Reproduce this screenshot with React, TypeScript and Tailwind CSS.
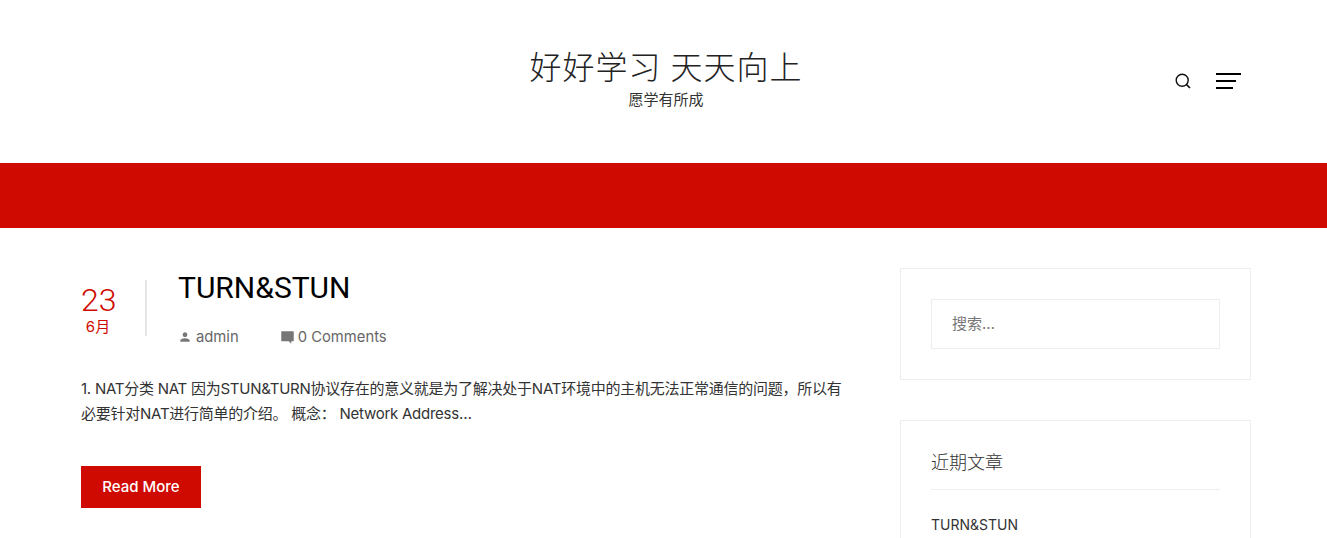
import React from 'react';

const sans = 'font-["Inter","Noto_Sans_CJK_SC",sans-serif]';

function SearchIcon() {
  return (
    <svg width="16" height="16" viewBox="0 0 16 16" fill="none" stroke="#111" strokeWidth="1.4">
      <circle cx="7.2" cy="7.2" r="6" />
      <path d="M11.6 11.6 15 15" strokeWidth="1.6" />
    </svg>
  );
}

function PostMeta() {
  return (
    <div className="flex items-center text-[14.8px] leading-[20px] text-[#666] mt-[19px]">
      <svg width="14" height="14" viewBox="0 0 24 24" fill="#777" className="mr-[4px]">
        <path d="M12 12c2.200 0 4-1.800 4-4s-1.800-4-4-4-4 1.800-4 4 1.800 4 4 4zm0 2c-2.700 0-8 1.300-8 4v2h16v-2c0-2.700-5.300-4-8-4z" />
      </svg>
      <span className="mr-[41px]">admin</span>
      <svg width="15" height="15" viewBox="0 0 24 24" fill="#777" className="mr-[3px]">
        <path d="M3 2h18a1 1 0 0 1 1 1v14a1 1 0 0 1-1 1h-3v4l-4-4H3a1 1 0 0 1-1-1V3a1 1 0 0 1 1-1z" />
      </svg>
      <span>0 Comments</span>
    </div>
  );
}

export default function App() {
  return (
    <div className={`h-[538px] overflow-hidden bg-white ${sans}`}>
      {/* Header */}
      <header className="relative h-[163px] flex flex-col items-center pt-[48px] pl-[5px]">
        <h1 className='text-[32px] leading-[40px] font-extralight tracking-[1px] text-[#222] font-["Liberation_Serif","Noto_Sans_CJK_SC",serif]'>
          好好学习 天天向上
        </h1>
        <p className="text-[15px] leading-[20px] text-[#333] mt-[2px]">愿学有所成</p>
        <div className="absolute left-[1175px] top-[73px] flex items-start gap-[25px]">
          <SearchIcon />
          <div className="flex flex-col gap-[5px]">
            <span className="block w-[25px] h-[2px] bg-black" />
            <span className="block w-[20px] h-[2px] bg-black" />
            <span className="block w-[17px] h-[2px] bg-black" />
          </div>
        </div>
      </header>

      {/* Red band */}
      <div className="h-[65px] bg-[#cf0a00]" />

      {/* Content */}
      <main className="flex pl-[81px] pt-[40px]">
        <article className="w-[769px] shrink-0">
          <div className="flex">
            <div className="w-[66px] h-[56px] mt-[12px] border-r-2 border-[#e5e5e5] shrink-0">
              <div className="w-[34px] text-center text-[#cf0a00]">
                <div className='text-[32px] leading-[36px] mt-[2px] font-light font-["Roboto",sans-serif]'>23</div>
                <div className="text-[15px] leading-[18px]">6月</div>
              </div>
            </div>
            <div className="pl-[31px]">
              <h2 className='text-[30px] leading-[40px] text-black font-["Roboto",sans-serif]'>TURN&amp;STUN</h2>
              <PostMeta />
            </div>
          </div>
          <p className="mt-[29px] text-[15px] leading-[25px] tracking-[-0.25px] text-[#333]">
            1. NAT分类 NAT 因为STUN&amp;TURN协议存在的意义就是为了解决处于NAT环境中的主机无法正常通信的问题，所以有必要针对NAT进行简单的介绍。 概念： Network Address…
          </p>
          <button className="mt-[40px] w-[120px] h-[42px] bg-[#cf0a00] text-white text-[15px] font-medium flex items-center justify-center">
            Read More
          </button>
        </article>

        {/* Sidebar */}
        <aside className="ml-[50px] w-[351px] shrink-0 flex flex-col gap-[40px]">
          <div className="border border-[#eee] p-[30px] h-[112px]">
            <div className="h-[50px] border border-[#eee] px-[20px] flex items-center text-[15px] text-[#777]">搜索…</div>
          </div>
          <div className="border border-[#eee] px-[30px] pt-[30px] h-[200px]">
            <h3 className='text-[18px] leading-[24px] text-[#333] font-light pb-[14px] border-b border-[#eee] font-["Liberation_Serif","Noto_Sans_CJK_SC",serif]'>
              近期文章
            </h3>
            <div className="mt-[25px] text-[14px] leading-[20px] text-[#333]">TURN&amp;STUN</div>
          </div>
        </aside>
      </main>
    </div>
  );
}
